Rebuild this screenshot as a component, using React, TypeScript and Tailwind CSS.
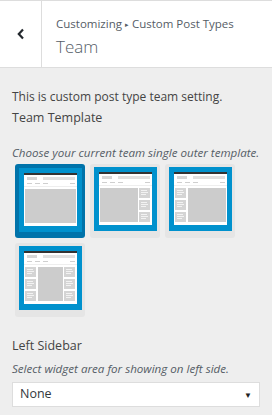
import React from "react";

type Layout = "full" | "right" | "left" | "both";

const layouts: { id: Layout; selected?: boolean }[] = [
  { id: "full", selected: true },
  { id: "right" },
  { id: "left" },
  { id: "both" },
];

function Widgets({ x }: { x: number }) {
  return (
    <g>
      {[21, 33, 45].map((y) => (
        <g key={y}>
          <rect x={x} y={y} width={11} height={10} fill="#d4d4d4" />
          <rect x={x + 2} y={y + 2} width={6} height={1} fill="#f2f2f2" />
          <rect x={x + 2} y={y + 4} width={7} height={1} fill="#f2f2f2" />
          <rect x={x + 2} y={y + 6} width={5} height={1} fill="#f2f2f2" />
        </g>
      ))}
    </g>
  );
}

function Thumb({ layout }: { layout: Layout }) {
  const content =
    layout === "full"
      ? { x: 6, w: 51 }
      : layout === "right"
      ? { x: 6, w: 38 }
      : layout === "left"
      ? { x: 19, w: 38 }
      : { x: 19, w: 25 };
  return (
    <svg width="63" height="64" viewBox="0 0 63 64" className="block">
      <rect width="63" height="64" fill="#0091cd" />
      <rect x="5" y="5" width="53" height="53" fill="#ffffff" />
      <rect x="5" y="5" width="53" height="2" fill="#333333" />
      <rect x="8" y="9" width="10" height="3" fill="#d6d6d6" />
      <rect x="24" y="9" width="32" height="3" fill="#e0e0e0" />
      <rect x="8" y="15" width="5" height="1" fill="#cfcfcf" />
      <rect x="16" y="15" width="5" height="1" fill="#cfcfcf" />
      <rect x="24" y="15" width="5" height="1" fill="#cfcfcf" />
      <rect x="51" y="15" width="5" height="1" fill="#cfcfcf" />
      <rect x="5" y="18" width="53" height="1" fill="#eeeeee" />
      <rect x={content.x} y="21" width={content.w} height="34" fill="#cccccc" />
      {(layout === "right" || layout === "both") && <Widgets x={45} />}
      {(layout === "left" || layout === "both") && <Widgets x={6} />}
    </svg>
  );
}

export default function App() {
  return (
    <div className="w-[272px] h-[415px] overflow-hidden bg-[#eeeeee] font-['Open_Sans',sans-serif] text-[#555d66]">
      {/* header */}
      <div className="flex h-[68px] bg-white border-t border-b border-[#dddddd]">
        <div className="w-[42px] flex items-center justify-center border-r border-[#dddddd]">
          <svg width="8" height="12" viewBox="0 0 8 12">
            <polyline points="6,1.5 1.8,6 6,10.5" fill="none" stroke="#23282d" strokeWidth="2.2" />
          </svg>
        </div>
        <div className="pl-[14px] pt-[14px] flex flex-col">
          <span className="text-[11.5px] leading-[18px] text-[#555d66]">
            Customizing <span className="text-[7px] align-[1px]">▸</span> Custom Post Types
          </span>
          <span className="text-[17px] leading-[26px] font-light text-[#555d66]">Team</span>
        </div>
      </div>

      {/* body */}
      <div className="px-3 pt-[19px]">
        <p className="text-[12px] leading-[20px] text-[#444]">This is custom post type team setting.</p>
        <h3 className="text-[12.5px] leading-[24px] font-medium text-[#444] mt-[-1px]">Team Template</h3>
        <p className="text-[11.6px] leading-[20px] italic text-[#555d66] mt-[13px] whitespace-nowrap">
          Choose your current team single outer template.
        </p>
        <div className="grid grid-cols-[70px_70px_70px] gap-[5px] mt-[1px] ml-[3px]">
          {layouts.map((l) => (
            <div
              key={l.id}
              className={
                l.selected
                  ? "h-[74px] rounded-[3px] bg-[#0073aa] pl-[4px] pt-[4px]"
                  : "h-[74px] rounded-[3px] bg-[#e5e5e5] pl-[4px] pt-[3px]"
              }
            >
              <Thumb layout={l.id} />
            </div>
          ))}
        </div>

        <h3 className="text-[12.5px] leading-[24px] text-[#444] mt-[17px]">Left Sidebar</h3>
        <p className="text-[11.6px] leading-[20px] italic text-[#555d66] whitespace-nowrap mt-[1px]">
          Select widget area for showing on left side.
        </p>
        <div className="mt-[3px] h-[25px] bg-white border border-[#dddddd] flex items-center justify-between pl-[7px] pr-[7px]">
          <span className="text-[12.5px] text-[#32373c]">None</span>
          <span className="text-[8px] text-[#222]">▼</span>
        </div>
      </div>
    </div>
  );
}
